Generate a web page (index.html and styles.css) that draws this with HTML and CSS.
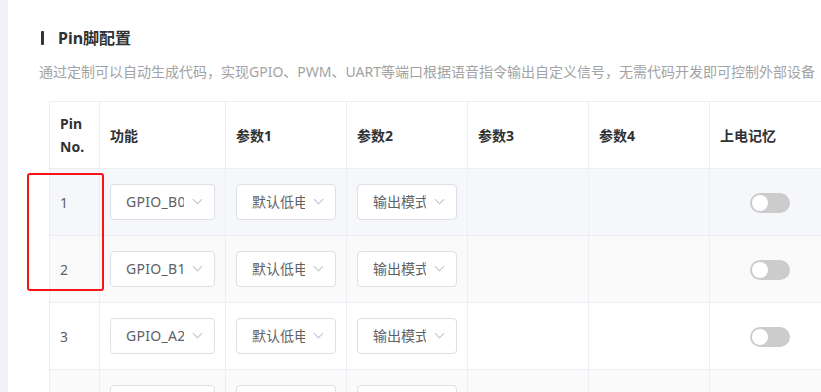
FILE: index.html
```html
<!DOCTYPE html>
<html lang="zh-CN">
<head>
<meta charset="utf-8">
<title>Pin脚配置</title>
<link rel="stylesheet" href="styles.css">
</head>
<body>
<div class="layout">
  <div class="side-strip"></div>
  <main class="panel">
    <h2 class="section-title">Pin脚配置</h2>
    <p class="section-desc">通过定制可以自动生成代码，实现GPIO、PWM、UART等端口根据语音指令输出自定义信号，无需代码开发即可控制外部设备</p>
    <div class="table-wrap">
      <table class="pin-table">
        <colgroup>
          <col class="c-pin"><col class="c-func"><col class="c-p"><col class="c-p"><col class="c-p"><col class="c-p"><col class="c-p">
        </colgroup>
        <thead>
          <tr>
            <th>Pin No.</th><th>功能</th><th>参数1</th><th>参数2</th><th>参数3</th><th>参数4</th><th>上电记忆</th>
          </tr>
        </thead>
        <tbody>
          <tr class="row-hover">
            <td>1</td>
            <td><div class="select"><span class="select-text latin">GPIO_B0</span><span class="arrow"></span></div></td>
            <td><div class="select"><span class="select-text">默认低电平</span><span class="arrow"></span></div></td>
            <td><div class="select"><span class="select-text">输出模式</span><span class="arrow"></span></div></td>
            <td></td><td></td>
            <td class="center"><span class="switch"><span class="knob"></span></span></td>
          </tr>
          <tr class="row-stripe">
            <td>2</td>
            <td><div class="select"><span class="select-text latin">GPIO_B1</span><span class="arrow"></span></div></td>
            <td><div class="select"><span class="select-text">默认低电平</span><span class="arrow"></span></div></td>
            <td><div class="select"><span class="select-text">输出模式</span><span class="arrow"></span></div></td>
            <td></td><td></td>
            <td class="center"><span class="switch"><span class="knob"></span></span></td>
          </tr>
          <tr>
            <td>3</td>
            <td><div class="select"><span class="select-text latin">GPIO_A2</span><span class="arrow"></span></div></td>
            <td><div class="select"><span class="select-text">默认低电平</span><span class="arrow"></span></div></td>
            <td><div class="select"><span class="select-text">输出模式</span><span class="arrow"></span></div></td>
            <td></td><td></td>
            <td class="center"><span class="switch"><span class="knob"></span></span></td>
          </tr>
          <tr class="row-stripe">
            <td>4</td>
            <td><div class="select"><span class="select-text latin">GPIO_A3</span><span class="arrow"></span></div></td>
            <td><div class="select"><span class="select-text">默认低电平</span><span class="arrow"></span></div></td>
            <td><div class="select"><span class="select-text">输出模式</span><span class="arrow"></span></div></td>
            <td></td><td></td>
            <td class="center"><span class="switch"><span class="knob"></span></span></td>
          </tr>
        </tbody>
      </table>
      <div class="highlight-box"></div>
    </div>
  </main>
</div>
</body>
</html>
```
FILE: styles.css
```css
html, body {
  margin: 0;
  padding: 0;
  width: 821px;
  height: 392px;
  overflow: hidden;
  background: #ffffff;
  font-family: "Noto Sans", "Noto Sans CJK SC", sans-serif;
}

.layout {
  display: flex;
  height: 392px;
}

.side-strip {
  width: 8px;
  flex: none;
  background: #eff1f6;
}

.panel {
  flex: 1;
  min-width: 0;
  padding-left: 31px;
  background: #ffffff;
}

.section-title {
  margin: 27px 0 0 2px;
  display: flex;
  align-items: center;
  font-size: 16px;
  line-height: 22px;
  font-weight: 700;
  color: #303133;
}

.section-title::before {
  content: "";
  width: 3px;
  height: 14px;
  background: #333;
  border-radius: 1px;
  margin-right: 14px;
}

.section-desc {
  margin: 13px 0 0 0;
  font-size: 14px;
  line-height: 20px;
  color: #a3a3a3;
  white-space: nowrap;
}

.table-wrap {
  position: relative;
  margin-top: 19px;
  margin-left: 10px;
}

.pin-table {
  border-collapse: collapse;
  table-layout: fixed;
  width: 781px;
  font-size: 14px;
  color: #606266;
}

.c-pin { width: 50px; }
.c-func { width: 126px; }
.c-p { width: 121px; }

.pin-table th,
.pin-table td {
  border: 1px solid #ebeef5;
  padding: 0 10px;
  text-align: left;
  vertical-align: middle;
}

.pin-table th {
  height: 66px;
  font-weight: 700;
  color: #303133;
  line-height: 23px;
}

.pin-table td {
  height: 66px;
}

.pin-table td.center {
  text-align: center;
}

.row-hover td { background: #f5f7fa; }
.row-stripe td { background: #fafafa; }

.select {
  position: relative;
  box-sizing: border-box;
  height: 36px;
  border: 1px solid #dcdfe6;
  border-radius: 4px;
  background: #ffffff;
  padding: 0 30px 0 15px;
  display: flex;
  align-items: center;
}

.select-text {
  display: block;
  overflow: hidden;
  white-space: nowrap;
  color: #606266;
  font-size: 14px;
  line-height: 20px;
}

.select-text.latin {
  letter-spacing: 0.3px;
}

.arrow {
  position: absolute;
  right: 13px;
  top: 11px;
  width: 6px;
  height: 6px;
  border-right: 1px solid #c0c4cc;
  border-bottom: 1px solid #c0c4cc;
  transform: rotate(45deg);
}

.switch {
  display: inline-block;
  position: relative;
  width: 40px;
  height: 20px;
  border-radius: 10px;
  background: #cccccc;
  vertical-align: middle;
}

.knob {
  position: absolute;
  left: 2px;
  top: 2px;
  width: 16px;
  height: 16px;
  border-radius: 50%;
  background: #ffffff;
}

.highlight-box {
  position: absolute;
  left: -22px;
  top: 72px;
  width: 73px;
  height: 114px;
  border: 2px solid #f5141a;
  border-radius: 3px;
}
```
